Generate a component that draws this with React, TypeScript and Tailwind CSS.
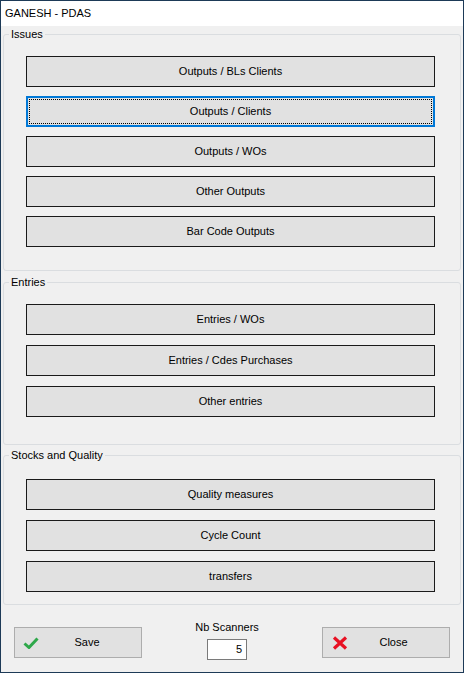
const ISSUES = ['Outputs / BLs Clients', 'Outputs / Clients', 'Outputs / WOs', 'Other Outputs', 'Bar Code Outputs'];
const ENTRIES = ['Entries / WOs', 'Entries / Cdes Purchases', 'Other entries'];
const STOCKS = ['Quality measures', 'Cycle Count', 'transfers'];

function MenuButton({ label, focused = false }: { label: string; focused?: boolean }) {
  if (focused) {
    return (
      <button
        type="button"
        className="w-[409px] h-[31px] p-[1px] bg-[#e1e1e1] border-2 border-[#0078d7] text-[11px] text-black"
      >
        <div className="h-full flex items-center justify-center border border-dotted border-black">{label}</div>
      </button>
    );
  }
  return (
    <button
      type="button"
      className="w-[409px] h-[31px] flex items-center justify-center bg-[#e1e1e1] border border-[#1a1a1a] text-[11px] text-black"
    >
      {label}
    </button>
  );
}

function Group({
  title,
  children,
  top,
  gap,
  bottom,
}: {
  title: string;
  children: React.ReactNode;
  top: string;
  gap: string;
  bottom: string;
}) {
  return (
    <fieldset className={`mx-[2px] border border-[#dadde0] rounded-[3px] px-0 ${bottom}`}>
      <legend className="ml-[5px] px-[2px] text-[11px] leading-[14px] text-black">{title}</legend>
      <div className={`flex flex-col pl-[22px] ${top} ${gap}`}>{children}</div>
    </fieldset>
  );
}

export default function App() {
  return (
    <div
      className="w-[464px] h-[673px] flex flex-col border border-[#1d3a57] bg-[#f0f0f0] overflow-hidden"
      style={{ fontFamily: '"Liberation Sans", Arial, sans-serif' }}
    >
      {/* Title bar */}
      <div className="h-[25px] shrink-0 bg-white pl-[4px] pb-[1px] flex items-center text-[11px] text-black">GANESH - PDAS</div>

      <div className="mt-[1px]">
        <Group title="Issues" top="mt-[15px]" gap="gap-[9px]" bottom="pb-[23px]">
          {ISSUES.map((l, i) => (
            <MenuButton key={l} label={l} focused={i === 1} />
          ))}
        </Group>
      </div>

      <div className="mt-[4px]">
        <Group title="Entries" top="mt-[15px]" gap="gap-[10px]" bottom="pb-[27px]">
          {ENTRIES.map((l) => (
            <MenuButton key={l} label={l} />
          ))}
        </Group>
      </div>

      <div className="mt-[3px]">
        <Group title="Stocks and Quality" top="mt-[17px]" gap="gap-[10px]" bottom="pb-[12px]">
          {STOCKS.map((l) => (
            <MenuButton key={l} label={l} />
          ))}
        </Group>
      </div>

      {/* Footer */}
      <div className="mt-auto flex items-end pl-[13px] pb-[13px]">
        <button
          type="button"
          className="mb-[1px] w-[128px] h-[31px] flex items-center bg-[#e1e1e1] border border-[#adadad] text-[11px] text-black"
        >
          <svg width="16" height="12" viewBox="0 0 16 12" className="ml-[8px]">
            <path d="M1.5 6.5 L6 10.5 L14.5 1.5" fill="none" stroke="#2ea84a" strokeWidth="3" />
          </svg>
          <span className="flex-1 text-center pr-[6px]">Save</span>
        </button>

        <div className="ml-[53px] w-[64px] flex flex-col items-center">
          <span className="text-[11px] leading-[14px] text-black whitespace-nowrap">Nb Scanners</span>
          <div className="mt-[5px] mb-[-1px] w-[40px] h-[21px] bg-white border border-[#7a7a7a] flex items-center justify-end pr-[4px] text-[11px] text-black">
            5
          </div>
        </div>

        <button
          type="button"
          className="mb-[1px] ml-[63px] w-[128px] h-[31px] flex items-center bg-[#e1e1e1] border border-[#adadad] text-[11px] text-black"
        >
          <svg width="16" height="14" viewBox="0 0 16 14" className="ml-[9px]">
            <path d="M2 1.5 L14 12.5 M14 1.5 L2 12.5" fill="none" stroke="#e81123" strokeWidth="3.2" />
          </svg>
          <span className="flex-1 text-center pr-[10px]">Close</span>
        </button>
      </div>
    </div>
  );
}
